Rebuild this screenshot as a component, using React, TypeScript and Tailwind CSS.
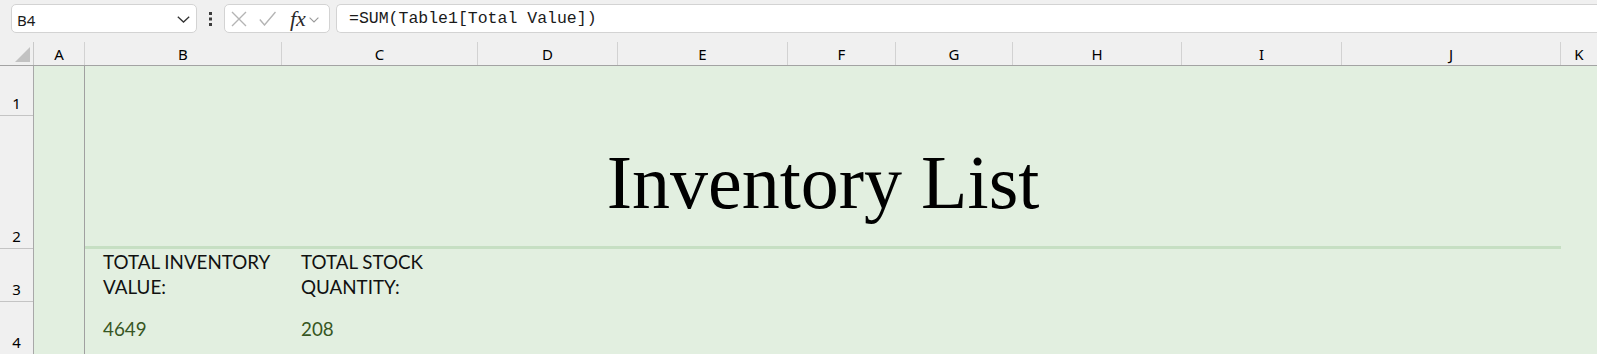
import React from "react";

const cols: { l: string; w: number }[] = [
  { l: "A", w: 51 },
  { l: "B", w: 197 },
  { l: "C", w: 196 },
  { l: "D", w: 140 },
  { l: "E", w: 170 },
  { l: "F", w: 108 },
  { l: "G", w: 117 },
  { l: "H", w: 169 },
  { l: "I", w: 160 },
  { l: "J", w: 219 },
];

const rows: { n: string; h: string }[] = [
  { n: "1", h: "h-[50px]" },
  { n: "2", h: "h-[133px]" },
  { n: "3", h: "h-[53px]" },
  { n: "4", h: "h-[53px]" },
];

export default function App() {
  return (
    <div className="w-[1597px] h-[354px] overflow-hidden bg-[#f0f0f0] font-['Noto_Sans',sans-serif] text-black">
      {/* Formula bar */}
      <div className="flex h-[42px] items-start pt-[4px] pl-[11px]">
        <div className="flex h-[29px] w-[186px] items-center justify-between rounded-[5px] border border-[#d3d3d3] bg-white pl-[5px] pr-[6px] pt-[2px]">
          <span className="text-[15px] leading-[20px] text-[#1a1a1a]">B4</span>
          <svg width="13" height="7" viewBox="0 0 13 7" className="mb-[1px]">
            <path d="M0.8 0.8 L6.5 6 L12.2 0.8" fill="none" stroke="#333" strokeWidth="1.3" />
          </svg>
        </div>
        <div className="flex h-[29px] w-[27px] items-center justify-center">
          <svg width="3" height="14" viewBox="0 0 3 14">
            <rect x="0" y="0" width="3" height="3" fill="#3c3c3c" />
            <rect x="0" y="5.5" width="3" height="3" fill="#3c3c3c" />
            <rect x="0" y="11" width="3" height="3" fill="#3c3c3c" />
          </svg>
        </div>
        <div className="flex h-[29px] w-[106px] items-center rounded-[5px] border border-[#d3d3d3] bg-white">
          <svg width="16" height="16" viewBox="0 0 16 16" className="ml-[6px]">
            <path d="M1 1 L15 15 M15 1 L1 15" fill="none" stroke="#b4b4b4" strokeWidth="1.4" />
          </svg>
          <svg width="17" height="15" viewBox="0 0 17 15" className="ml-[12px]">
            <path d="M0.8 8.5 L5.5 14 L16.5 1" fill="none" stroke="#b4b4b4" strokeWidth="1.4" />
          </svg>
          <span className="ml-[14px] font-['Liberation_Serif',serif] italic text-[22px] leading-[20px] text-[#2a2a2a]">
            fx
          </span>
          <svg width="10" height="6" viewBox="0 0 10 6" className="ml-[3px] mt-[2px]">
            <path d="M0.6 0.6 L5 5 L9.4 0.6" fill="none" stroke="#9a9a9a" strokeWidth="1.1" />
          </svg>
        </div>
        <div className="ml-[6px] flex h-[29px] flex-1 items-center rounded-l-[5px] border border-r-0 border-[#d3d3d3] bg-white pl-[12px] pt-[1px]">
          <span className="font-['Liberation_Mono',monospace] text-[16.5px] leading-[20px] text-[#1a1a1a]">
            =SUM(Table1[Total Value])
          </span>
        </div>
      </div>

      {/* Column headers */}
      <div className="flex h-[24px] border-b border-[#a3a3a3]">
        <div className="relative w-[34px] shrink-0 border-r border-[#c9c9c9]">
          <svg width="16" height="15" viewBox="0 0 16 15" className="absolute left-[15px] top-[5px]">
            <path d="M15 0 L15 15 L0 15 Z" fill="#c2c2c2" />
          </svg>
        </div>
        {cols.map((c) => (
          <div
            key={c.l}
            style={{ width: c.w }}
            className="flex shrink-0 items-center justify-center border-r border-[#d2d2d2] text-[15px] leading-[20px]"
          >
            {c.l}
          </div>
        ))}
        <div className="flex flex-1 items-center justify-center text-[15px] leading-[20px]">K</div>
      </div>

      {/* Body */}
      <div className="flex">
        <div className="flex w-[34px] shrink-0 flex-col border-r border-[#a8a8a8]">
          {rows.map((r) => (
            <div
              key={r.n}
              className={`${r.h} flex items-end justify-center border-b border-[#c4c4c4] pb-[2px] text-[15px] leading-[20px]`}
            >
              {r.n}
            </div>
          ))}
        </div>
        <div className="flex flex-1 bg-[#e2efe0]">
          <div className="w-[50px] shrink-0" />
          <div className="flex flex-1 flex-col border-l border-[#a0a0a0]">
            <div className="h-[50px]" />
            <div className="flex h-[133px] w-[1476px] items-end justify-center border-b-[3px] border-[#c6dfc3] pb-[26px]">
              <span className="font-['Liberation_Serif',serif] text-[76px] leading-none text-black">
                Inventory List
              </span>
            </div>
            <div className="flex h-[53px] font-['Lato',sans-serif] text-[18.8px] leading-[25px] text-[#111]">
              <div className="w-[197px] whitespace-nowrap pl-[18px]">
                <div>TOTAL INVENTORY</div>
                <div>VALUE:</div>
              </div>
              <div className="w-[196px] whitespace-nowrap pl-[19px]">
                <div>TOTAL STOCK</div>
                <div>QUANTITY:</div>
              </div>
            </div>
            <div className="flex pt-[14px] font-['Lato',sans-serif] text-[18.8px] leading-[25px] text-[#375623]">
              <div className="w-[197px] pl-[18px]">4649</div>
              <div className="w-[196px] pl-[19px]">208</div>
            </div>
          </div>
        </div>
      </div>
    </div>
  );
}
